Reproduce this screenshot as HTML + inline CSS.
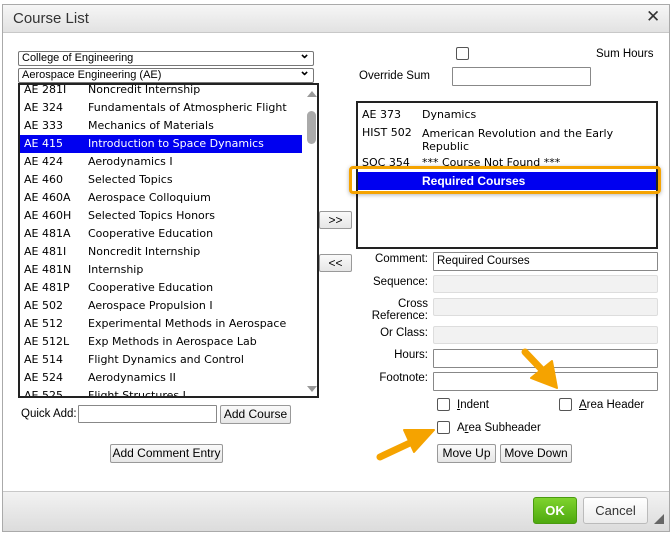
<!DOCTYPE html>
<html><head><meta charset="utf-8"><style>
*{box-sizing:border-box;margin:0;padding:0}
body{width:672px;height:534px;background:#fff;font-family:"DejaVu Sans","Liberation Sans",sans-serif;font-size:11px;color:#000;position:relative;overflow:hidden}
.a{position:absolute}
.dlg{left:2px;top:4px;width:668px;height:528px;border:1px solid #aaa;background:#fff}
.title{left:3px;top:5px;width:666px;height:28px;background:linear-gradient(#f6f6f6,#e2e2e2);border-bottom:1px solid #c8c8c8}
.title span{position:absolute;left:10px;top:5px;font-family:"Liberation Sans",sans-serif;font-size:15px;color:#333}
.foot{left:3px;top:491px;width:666px;height:40px;background:linear-gradient(#f2f2f2,#dcdcdc);border-top:1px solid #c8c8c8}
.sel{height:15px;border:1px solid #777;border-radius:2px;font-size:11px;line-height:13px;padding-left:3px;font-family:"Liberation Sans",sans-serif;background:#fff}
.sel:after{content:"⌄";position:absolute;right:3px;top:-5px;font-size:13px;font-weight:bold}
.list{border:2px solid #222;background:#fff;overflow:hidden}
.row{position:absolute;height:18px;line-height:18px;white-space:nowrap}
.row b{font-weight:normal;position:absolute}
.hl{background:#0000f0;color:#fff}
.inp{border:1px solid #888;background:#fff;border-radius:1px}
.dis{border:1px solid #ddd;background:#f2f2f2;border-radius:2px}
.btn{border:1px solid #999;background:linear-gradient(#fafafa,#e6e6e6);border-radius:2px;text-align:center;font-size:12px;line-height:17px;font-family:"Liberation Sans",sans-serif;white-space:nowrap}
.lbl{font-family:"Liberation Sans",sans-serif;font-size:11.5px;text-align:right;width:90px}
.cb{width:13px;height:13px;border:1px solid #555;border-radius:2px;background:#fff}
.t{font-family:'Liberation Sans',sans-serif;font-size:11.5px}
</style></head><body>
<div class="a dlg"></div>
<div class="a title"><span>Course List</span></div>
<div class="a" style="left:646px;top:7px;font-size:17px;font-weight:bold;color:#333">✕</div>

<div class="a sel" style="left:18px;top:51px;width:296px">College of Engineering</div>
<div class="a sel" style="left:18px;top:68px;width:296px">Aerospace Engineering (AE)</div>

<div class="a list" style="left:18px;top:83px;width:301px;height:315px">
<div style="position:absolute;left:0;top:-4px;width:284px">
<div class="row" style="top:0;width:284px"><b style="left:4px">AE 281I</b><b style="left:68px">Noncredit Internship</b></div>
<div class="row" style="top:18px;width:284px"><b style="left:4px">AE 324</b><b style="left:68px">Fundamentals of Atmospheric Flight</b></div>
<div class="row" style="top:36px;width:284px"><b style="left:4px">AE 333</b><b style="left:68px">Mechanics of Materials</b></div>
<div class="row hl" style="top:54px;width:282px"><b style="left:4px">AE 415</b><b style="left:68px">Introduction to Space Dynamics</b></div>
<div class="row" style="top:72px;width:284px"><b style="left:4px">AE 424</b><b style="left:68px">Aerodynamics I</b></div>
<div class="row" style="top:90px;width:284px"><b style="left:4px">AE 460</b><b style="left:68px">Selected Topics</b></div>
<div class="row" style="top:108px;width:284px"><b style="left:4px">AE 460A</b><b style="left:68px">Aerospace Colloquium</b></div>
<div class="row" style="top:126px;width:284px"><b style="left:4px">AE 460H</b><b style="left:68px">Selected Topics Honors</b></div>
<div class="row" style="top:144px;width:284px"><b style="left:4px">AE 481A</b><b style="left:68px">Cooperative Education</b></div>
<div class="row" style="top:162px;width:284px"><b style="left:4px">AE 481I</b><b style="left:68px">Noncredit Internship</b></div>
<div class="row" style="top:180px;width:284px"><b style="left:4px">AE 481N</b><b style="left:68px">Internship</b></div>
<div class="row" style="top:198px;width:284px"><b style="left:4px">AE 481P</b><b style="left:68px">Cooperative Education</b></div>
<div class="row" style="top:216px;width:284px"><b style="left:4px">AE 502</b><b style="left:68px">Aerospace Propulsion I</b></div>
<div class="row" style="top:234px;width:284px"><b style="left:4px">AE 512</b><b style="left:68px">Experimental Methods in Aerospace</b></div>
<div class="row" style="top:252px;width:284px"><b style="left:4px">AE 512L</b><b style="left:68px">Exp Methods in Aerospace Lab</b></div>
<div class="row" style="top:270px;width:284px"><b style="left:4px">AE 514</b><b style="left:68px">Flight Dynamics and Control</b></div>
<div class="row" style="top:288px;width:284px"><b style="left:4px">AE 524</b><b style="left:68px">Aerodynamics II</b></div>
<div class="row" style="top:306px;width:284px"><b style="left:4px">AE 525</b><b style="left:68px">Flight Structures I</b></div>
</div>
<div style="position:absolute;left:287px;top:6px;width:0;height:0;border-left:5px solid transparent;border-right:5px solid transparent;border-bottom:6px solid #999"></div>
<div style="position:absolute;left:287px;top:26px;width:9px;height:33px;background:#aaa;border-radius:5px"></div>
<div style="position:absolute;left:287px;top:301px;width:0;height:0;border-left:5px solid transparent;border-right:5px solid transparent;border-top:6px solid #999"></div>
</div>

<div class="a t" style="left:21px;top:408px;">Quick Add:</div>
<div class="a inp" style="left:78px;top:405px;width:139px;height:18px"></div>
<div class="a btn" style="left:220px;top:405px;width:71px;height:19px">Add Course</div>
<div class="a btn" style="left:110px;top:444px;width:113px;height:19px">Add Comment Entry</div>

<div class="a btn" style="left:319px;top:211px;width:33px;height:18px;line-height:16px">&gt;&gt;</div>
<div class="a btn" style="left:319px;top:254px;width:33px;height:18px;line-height:16px">&lt;&lt;</div>

<div class="a cb" style="left:456px;top:47px"></div>
<div class="a t" style="left:596px;top:48px">Sum Hours</div>
<div class="a t" style="left:359px;top:70px">Override Sum</div>
<div class="a inp" style="left:452px;top:67px;width:139px;height:19px"></div>

<div class="a list" style="left:356px;top:101px;width:302px;height:148px">
<div class="row" style="top:3px"><b style="left:4px">AE 373</b><b style="left:64px">Dynamics</b></div>
<div class="row" style="top:21px"><b style="left:4px">HIST 502</b><b style="left:64px;line-height:13px;top:3px">American Revolution and the Early<br>Republic</b></div>
<div class="row" style="top:51px"><b style="left:4px">SOC 354</b><b style="left:64px">*** Course Not Found ***</b></div>
<div class="row hl" style="top:69px;left:0;width:298px"><b style="left:64px;font-weight:bold;font-family:'Liberation Sans',sans-serif;font-size:12px">Required Courses</b></div>
</div>
<div class="a" style="left:349px;top:166px;width:312px;height:28px;border:3px solid #f5a300;border-radius:4px;box-shadow:0 1px 4px rgba(0,0,0,.3)"></div>

<div class="a lbl" style="left:338px;top:253px">Comment:</div>
<div class="a inp t" style="left:433px;top:252px;width:225px;height:19px;padding-left:3px;line-height:17px">Required Courses</div>
<div class="a lbl" style="left:338px;top:276px">Sequence:</div>
<div class="a dis" style="left:433px;top:275px;width:225px;height:18px"></div>
<div class="a lbl" style="left:338px;top:298px;line-height:12px">Cross<br>Reference:</div>
<div class="a dis" style="left:433px;top:298px;width:225px;height:18px"></div>
<div class="a lbl" style="left:338px;top:327px">Or Class:</div>
<div class="a dis" style="left:433px;top:326px;width:225px;height:18px"></div>
<div class="a lbl" style="left:338px;top:349px">Hours:</div>
<div class="a inp" style="left:433px;top:349px;width:225px;height:19px"></div>
<div class="a lbl" style="left:338px;top:372px">Footnote:</div>
<div class="a inp" style="left:433px;top:372px;width:225px;height:19px"></div>

<div class="a cb" style="left:437px;top:398px"></div>
<div class="a t" style="left:457px;top:399px"><u>I</u>ndent</div>
<div class="a cb" style="left:559px;top:398px"></div>
<div class="a t" style="left:579px;top:399px"><u>A</u>rea Header</div>
<div class="a cb" style="left:437px;top:421px"></div>
<div class="a t" style="left:457px;top:422px">A<u>r</u>ea Subheader</div>
<div class="a btn" style="left:437px;top:444px;width:59px;height:19px">Move Up</div>
<div class="a btn" style="left:500px;top:444px;width:72px;height:19px">Move Down</div>

<svg class="a" style="left:0;top:0" width="672" height="534">
<g fill="#f5a300" stroke="#f5a300" stroke-linecap="round" stroke-linejoin="round">
<line x1="525" y1="352" x2="544" y2="372" stroke-width="7"/>
<path d="M531 378 L557 388 L552 361 Z" stroke-width="2"/>
<line x1="380" y1="457" x2="412" y2="442" stroke-width="7"/>
<path d="M404 430 L434 430 L414 452 Z" stroke-width="2"/>
</g>
</svg>
<div class="a foot"></div>
<div class="a" style="left:533px;top:497px;width:44px;height:27px;background:linear-gradient(#7fd32e,#4ea90f);border:1px solid #4a9a10;border-radius:3px;color:#fff;font-weight:bold;font-family:'Liberation Sans',sans-serif;font-size:13px;text-align:center;line-height:25px">OK</div>
<div class="a" style="left:583px;top:497px;width:65px;height:27px;background:linear-gradient(#fff,#ececec);border:1px solid #bbb;border-radius:3px;color:#333;font-family:'Liberation Sans',sans-serif;font-size:13px;text-align:center;line-height:25px">Cancel</div>
<div class="a" style="left:654px;top:514px;width:0;height:0;border-left:10px solid transparent;border-bottom:10px solid #666"></div>
</body></html>
